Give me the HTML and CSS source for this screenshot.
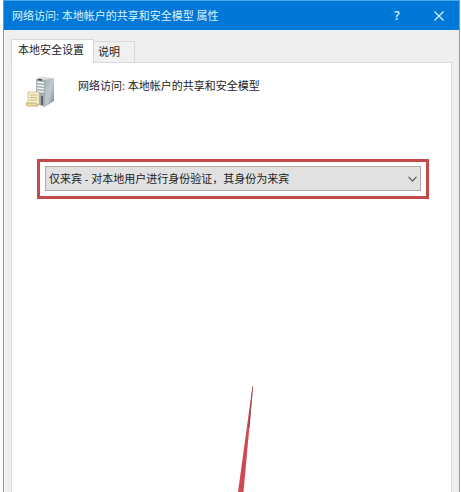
FILE: index.html
```html
<!DOCTYPE html>
<html lang="zh-CN">
<head>
    <meta charset="UTF-8">
    <meta name="viewport" content="width=device-width, initial-scale=1.0">
    <title>网络访问: 本地帐户的共享和安全模型 属性</title>
    <link rel="stylesheet" href="styles.css">
</head>
<body>

    <div class="window">
        <header class="titlebar">
            <h1 class="title">网络访问: 本地帐户的共享和安全模型 属性</h1>
            <button class="title-button help" type="button">?</button>
            <button class="title-button" type="button" aria-label="关闭">
                <svg width="10" height="10" viewBox="0 0 10 10">
                    <path d="M0.5 0.5L9.5 9.5M9.5 0.5L0.5 9.5" fill="none" stroke="#d9f4ff" stroke-width="1.2"/>
                </svg>
            </button>
        </header>

        <div class="content">
            <div class="tabs" role="tablist">
                <button class="tab active" type="button" role="tab" aria-selected="true">本地安全设置</button>
                <button class="tab" type="button" role="tab" aria-selected="false">说明</button>
            </div>

            <main class="panel">
                <div class="policy">
                    <!-- 服务器图标 -->
                    <svg class="server-icon" width="30" height="32" viewBox="0 0 30 32">
                        <defs>
                            <linearGradient id="side" x1="0" y1="0" x2="1" y2="1">
                                <stop offset="0" stop-color="#a9b0b3"/>
                                <stop offset="0.5" stop-color="#c3c9cc"/>
                                <stop offset="1" stop-color="#7d878c"/>
                            </linearGradient>
                        </defs>
                        <path d="M10 2L14 0L28 1L19 4Z" fill="#d5d9da"/>
                        <path d="M10 2L19 3V30L10 27Z" fill="#a3adb2"/>
                        <path d="M19 3L28 1V24L19 30Z" fill="url(#side)"/>
                        <path d="M11 5L18 6M11 8L18 9M11 11L18 12M11 14L18 15" stroke="#eef2f3" stroke-width="1.3"/>
                        <path d="M12 2.5L16 3" stroke="#3f494f" stroke-width="1.5"/>
                        <path d="M16 19V28" stroke="#59666d" stroke-width="2"/>
                        <path d="M2 15H13V28H2Z" fill="#f4edcf" stroke="#cbbd8b" stroke-width="0.8"/>
                        <path d="M4 18H11M4 20.5H11M4 23H11" stroke="#cdbb80" stroke-width="1"/>
                        <path d="M0 26H10L12 29H2Q0 29 0 26Z" fill="#eadb9e" stroke="#b9a76c" stroke-width="0.8"/>
                    </svg>
                    <label class="policy-name" for="model">网络访问: 本地帐户的共享和安全模型</label>
                </div>

                <div class="highlight">
                    <div class="select-box">
                        <select class="select" id="model">
                            <option>仅来宾 - 对本地用户进行身份验证，其身份为来宾</option>
                        </select>
                        <svg class="chevron" width="9" height="6" viewBox="0 0 9 6">
                            <path d="M0.5 0.8L4.5 4.8L8.5 0.8" fill="none" stroke="#555" stroke-width="1.2"/>
                        </svg>
                    </div>
                </div>
            </main>
        </div>

        <!-- 红色指示线 -->
        <svg class="pointer" width="16" height="106" viewBox="0 0 16 106">
            <path d="M14.5 0L15 1L5.5 106H0Z" fill="#cf4a50"/>
            <path d="M14.5 0L15 1L11.5 42L10 42Z" fill="#9d4a50"/>
        </svg>
    </div>

</body>
</html>
```
FILE: styles.css
```css
* {
    box-sizing: border-box;
}

body {
    margin: 0;
    background: #fff;
    color: #222;
    font-family: "Open Sans", "Noto Sans CJK SC", sans-serif;
    font-size: 11px;
    line-height: 16px;
}

button,
select {
    font: inherit;
    color: inherit;
}

.window {
    position: relative;
    display: flex;
    flex-direction: column;
    height: 100vh;
    margin: 0 1px 0 3px;
    border-top: 1px solid #4ba3e8;
    border-left: 1px solid #5fa3b8;
    border-right: 1px solid #8b9bc4;
    background: #efefef;
    overflow: hidden;
}

.titlebar {
    display: flex;
    align-items: center;
    flex: none;
    height: 29px;
    padding: 0 9px 0 8px;
    background: #0078d7;
    color: #d9f4ff;
}

.title {
    flex: 1;
    margin: 0;
    font-size: 11px;
    font-weight: normal;
}

.title-button {
    display: flex;
    align-items: center;
    justify-content: center;
    width: 22px;
    height: 24px;
    margin-left: 20px;
    padding: 0;
    border: none;
    background: none;
}

.help {
    font-size: 12px;
    font-weight: 600;
}

.content {
    display: flex;
    flex-direction: column;
    flex: 1;
    padding: 9px 6px 0;
    border-left: 1px solid #f3f7fb;
    border-right: 1px solid #e6eaf6;
}

.tabs {
    display: flex;
    align-items: flex-end;
}

.tab {
    height: 21px;
    padding: 0 14px 0 4px;
    border: 1px solid #d9d9d9;
    border-bottom: none;
    border-left: none;
    background: #f0f0f0;
}

.tab.active {
    z-index: 1;
    height: 24px;
    margin-bottom: -1px;
    padding: 0 9px 3px 6px;
    border-left: 1px solid #d9d9d9;
    background: #fff;
}

.panel {
    flex: 1;
    padding: 14px 22px 0 14px;
    border: 1px solid #dcdcdc;
    border-bottom: none;
    background: #fff;
}

.policy {
    display: flex;
    align-items: flex-start;
    gap: 22px;
}

.policy-name {
    padding-top: 1px;
}

.highlight {
    margin: 50px 0 0 11px;
    padding: 4px 5px 5px;
    border: 3px solid #c4494b;
}

.select-box {
    position: relative;
}

.select {
    display: block;
    width: 100%;
    height: 25px;
    padding: 0 24px 0 3px;
    border: 1px solid #a9aca6;
    border-radius: 0;
    background: #e1e1e1;
    appearance: none;
}

.chevron {
    position: absolute;
    top: 10px;
    right: 4px;
    pointer-events: none;
}

.pointer {
    position: absolute;
    bottom: 0;
    left: 234px;
    pointer-events: none;
}
```
